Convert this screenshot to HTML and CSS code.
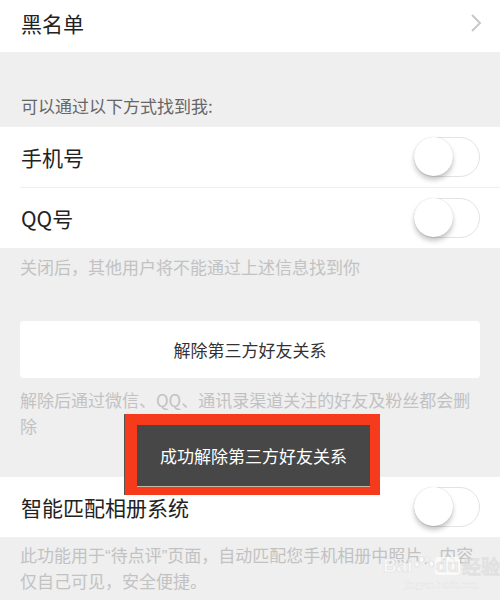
FILE: index.html
```html
<!DOCTYPE html>
<html lang="zh-CN">
<head>
  <meta charset="UTF-8">
  <meta name="viewport" content="width=device-width, initial-scale=1.0">
  <title>隐私</title>
  <link rel="stylesheet" href="styles.css">
</head>
<body>
  <div class="page">
    <div class="group group-top">
      <div class="row">
        <span class="row-label">黑名单</span>
        <svg class="chevron" width="12" height="20" viewBox="0 0 12 20">
          <path d="M2 2 L10 10 L2 18" fill="none" stroke="#c8c8c8" stroke-width="2"/>
        </svg>
      </div>
    </div>

    <div class="section-title">可以通过以下方式找到我:</div>

    <div class="group">
      <div class="row">
        <span class="row-label">手机号</span>
        <div class="switch"><div class="knob"></div></div>
      </div>
      <div class="divider"></div>
      <div class="row">
        <span class="row-label">QQ号</span>
        <div class="switch"><div class="knob"></div></div>
      </div>
    </div>

    <div class="note">关闭后，其他用户将不能通过上述信息找到你</div>

    <div class="action-btn">解除第三方好友关系</div>
    <div class="note note-wrap">解除后通过微信、QQ、通讯录渠道关注的好友及粉丝都会删除</div>

    <div class="group">
      <div class="row">
        <span class="row-label">智能匹配相册系统</span>
        <div class="switch"><div class="knob"></div></div>
      </div>
    </div>
    <div class="note note-wrap note-last">此功能用于“待点评”页面，自动匹配您手机相册中照片，内容仅自己可见，安全便捷。</div>
  </div>

  <div class="toast">
    <div class="toast-inner">成功解除第三方好友关系</div>
  </div>

  <div class="watermark">
    <div class="wm-logo">
      <span>Bai</span>
      <svg width="22" height="20" viewBox="0 0 22 20">
        <ellipse cx="4" cy="8" rx="2.5" ry="3" fill="#fff" stroke="#dcdcdc"/>
        <ellipse cx="8.5" cy="3.5" rx="2.5" ry="3" fill="#fff" stroke="#dcdcdc"/>
        <ellipse cx="14" cy="3.5" rx="2.5" ry="3" fill="#fff" stroke="#dcdcdc"/>
        <ellipse cx="18.5" cy="8" rx="2.5" ry="3" fill="#fff" stroke="#dcdcdc"/>
      </svg>
      <span class="wm-du">du</span>
      <span>经验</span>
    </div>
    <div class="wm-url">jingyan.baidu.com</div>
  </div>
</body>
</html>
```

FILE: styles.css
```css
body {
  margin: 0;
  background-color: #efefef;
  font-family: "Noto Sans CJK SC", "Noto Sans", sans-serif;
  color: #222;
}

.page {
  width: 500px;
}

.group {
  background-color: #fff;
}

.row {
  display: flex;
  align-items: center;
  justify-content: space-between;
  height: 60px;
  padding: 0 21px;
}

.group-top .row {
  height: 52px;
  box-sizing: border-box;
  padding-bottom: 6px;
}

.row-label {
  font-size: 21px;
}

.chevron {
  margin-right: -3px;
}

.divider {
  height: 1px;
  margin-left: 20px;
  background-color: #eeeeee;
}

.section-title {
  height: 75px;
  box-sizing: border-box;
  padding: 0 21px 9px;
  display: flex;
  align-items: flex-end;
  font-size: 17px;
  color: #666;
}

.switch {
  width: 64px;
  height: 38px;
  border: 1.5px solid #e3e3e3;
  border-radius: 20px;
  position: relative;
  margin-right: -1px;
}

.knob {
  position: absolute;
  left: -1px;
  top: -1px;
  width: 39px;
  height: 39px;
  border-radius: 50%;
  background-color: #fff;
  box-shadow: 0 4px 5px rgba(0, 0, 0, 0.22), 0 0 1px rgba(0, 0, 0, 0.2);
}

.note {
  padding: 6px 20px 0;
  height: 73px;
  box-sizing: border-box;
  font-size: 17px;
  line-height: 26px;
  color: #c2c2c2;
}

.note-wrap {
  height: auto;
  padding: 9px 20px 38px;
}

/* narrow curly quotes come from Liberation Sans, CJK from Noto */
.note-last {
  padding: 7px 20px 0;
  font-family: "Liberation Sans", "Noto Sans CJK SC", sans-serif;
}

.action-btn {
  margin: 0 20px;
  height: 57px;
  display: flex;
  align-items: center;
  justify-content: center;
  background-color: #fff;
  border-radius: 4px;
  font-size: 17px;
  color: #333;
}

.toast {
  position: absolute;
  left: 125px;
  top: 414px;
  width: 233px;
  height: 62px;
  border: solid #f53b1c;
  border-width: 11px 10px 8px 12px;
  box-shadow: -1px 0 0 #555;
}

.toast-inner {
  height: 100%;
  display: flex;
  align-items: center;
  justify-content: center;
  background-color: #474747;
  color: #fff;
  font-size: 17px;
  border-bottom: 1px solid #c8b8a0;
  box-sizing: border-box;
}

.watermark {
  position: absolute;
  left: 383px;
  top: 552px;
  display: flex;
  flex-direction: column;
  align-items: center;
  color: #fff;
  opacity: 0.7;
}

.wm-logo {
  display: flex;
  align-items: center;
  font-family: "Liberation Sans", sans-serif;
  font-size: 19px;
  font-weight: bold;
  -webkit-text-stroke: 0.6px #dcdcdc;
}

.wm-du {
  background-color: #fff;
  color: #efefef;
  border-radius: 4px;
  padding: 0 1px;
  line-height: 18px;
  margin-right: 2px;
}

.wm-url {
  font-family: "Liberation Serif", serif;
  font-size: 10px;
  -webkit-text-stroke: 0.3px #dcdcdc;
}
```
